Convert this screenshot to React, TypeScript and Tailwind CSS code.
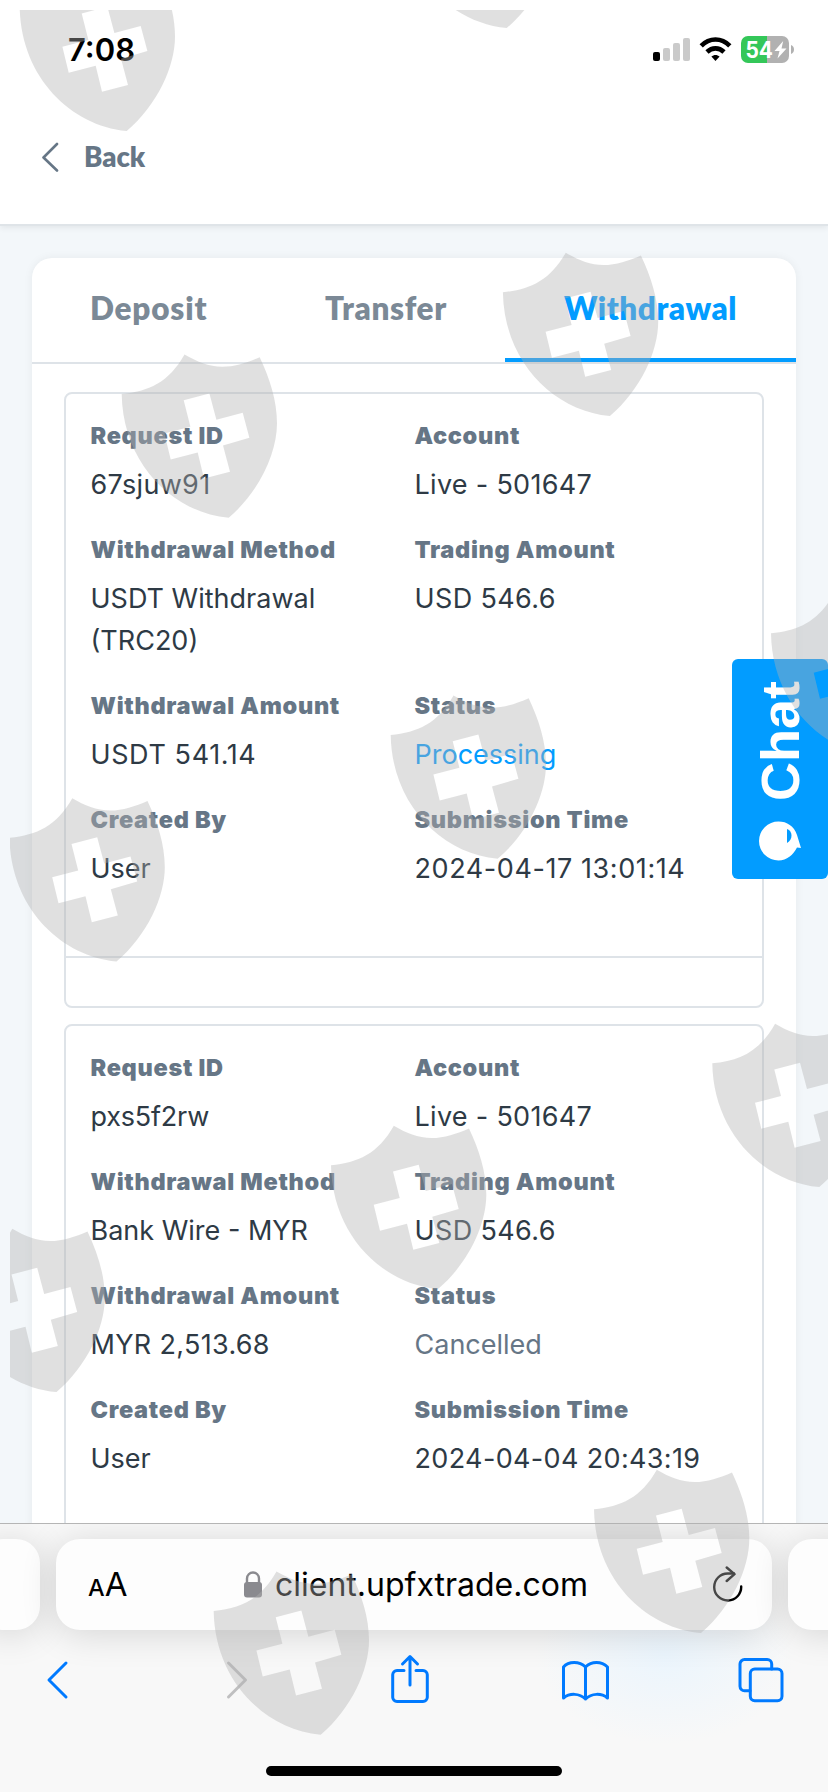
import { ReactNode } from "react";

type Field = {
  label: string;
  value: string;
  style?: string;
  tall?: boolean;
};

const shields = [
  [19.7, -32.3],
  [399.7, -135.3],
  [121.7, 354.5],
  [502.9, 252.7],
  [771, 593.8],
  [390.7, 695.5],
  [9.5, 798.3],
  [712.3, 1023.8],
  [331, 1125.8],
  [-50.5, 1228.8],
  [594, 1469.8],
  [213.7, 1571.5],
];

const tabs = [
  { title: "Deposit", active: false, style: "w-[234px] pl-[58px] tracking-[0.8px]" },
  { title: "Transfer", active: false, style: "w-[239px] pl-[59px] tracking-[0.65px]" },
  { title: "Withdrawal", active: true, style: "w-[291px] pl-[59px] tracking-[0.5px]" },
];

const requests: Field[][] = [
  [
    { label: "Request ID", value: "67sjuw91", style: "text-[#2e3a45] tracking-[0.3px]" },
    { label: "Account", value: "Live - 501647", style: "text-[#2e3a45] tracking-[0.3px]" },
    { label: "Withdrawal Method", value: "USDT Withdrawal (TRC20)", tall: true },
    { label: "Trading Amount", value: "USD 546.6", style: "text-[#2e3a45] tracking-[0.37px]", tall: true },
    { label: "Withdrawal Amount", value: "USDT 541.14", style: "text-[#2e3a45] tracking-[0.6px]" },
    { label: "Status", value: "Processing", style: "text-[#029cff]" },
    { label: "Created By", value: "User" },
    { label: "Submission Time", value: "2024-04-17 13:01:14", style: "text-[#2e3a45] tracking-[0.58px] whitespace-nowrap" },
  ],
  [
    { label: "Request ID", value: "pxs5f2rw", style: "text-[#2e3a45] tracking-[-0.2px]" },
    { label: "Account", value: "Live - 501647", style: "text-[#2e3a45] tracking-[0.3px]" },
    { label: "Withdrawal Method", value: "Bank Wire - MYR" },
    { label: "Trading Amount", value: "USD 546.6", style: "text-[#2e3a45] tracking-[0.37px]" },
    { label: "Withdrawal Amount", value: "MYR 2,513.68", style: "text-[#2e3a45] tracking-[0.32px]" },
    { label: "Status", value: "Cancelled", style: "text-[#667686]" },
    { label: "Created By", value: "User" },
    { label: "Submission Time", value: "2024-04-04 20:43:19", style: "text-[#2e3a45] tracking-[0.35px] whitespace-nowrap" },
  ],
];

function StatusBar() {
  return (
    <div className="flex h-[100px] items-center pl-[68px] pr-[33px]">
      <span className="pb-[2px] font-['Inter',sans-serif] text-[31px] leading-none font-semibold">7:08</span>
      <svg className="ml-auto" width="142" height="28" viewBox="0 0 142 28">
        <rect x="0" y="16" width="7" height="9" rx="2" fill="#000" />
        <rect x="10" y="12" width="7" height="13" rx="2" fill="#cacaca" />
        <rect x="20" y="7" width="7" height="18" rx="2" fill="#cacaca" />
        <rect x="30" y="2" width="7" height="23" rx="2" fill="#cacaca" />
        <g fill="none" stroke="#000" strokeWidth="4.6">
          <path d="M48.200 9.800C56.400 1.400 68.600 1.400 76.800 9.800" />
          <path d="M54 16C59 11.200 66 11.200 71 16" />
        </g>
        <path d="M58.400 20.600C60.800 18.400 64.200 18.400 66.600 20.600L62.500 25Z" fill="#000" />
        <path d="M95 0H114V27H95A7 7 0 0 1 88 20V7A7 7 0 0 1 95 0Z" fill="#34c759" />
        <path d="M114 0H129A7 7 0 0 1 136 7V20A7 7 0 0 1 129 27H114Z" fill="#b1b1b1" />
        <path d="M138 9C142 10.500 142 16.500 138 18Z" fill="#b1b1b1" />
        <text x="92.500" y="21.500" fontSize="22.500" fontWeight="700" fill="#fff" fontFamily="Inter, sans-serif" textLength="27.500" lengthAdjust="spacingAndGlyphs">54</text>
        <path d="M130.200 5L121.500 15H126.500L124.500 22.500L133.500 12.500H128.500Z" fill="#fff" />
      </svg>
    </div>
  );
}

function RequestField({ label, value, style, tall }: Field) {
  return (
    <div className={tall ? "h-[156px]" : "h-[114px]"}>
      <div className="text-[23.5px] leading-[36px] font-black tracking-[0.7px] whitespace-nowrap text-[#667686]">{label}</div>
      <div className={"mt-[10px] w-[250px] text-[27px] leading-[42px] " + (style || "text-[#2e3a45]")}>{value}</div>
    </div>
  );
}

function RequestCard({ fields }: { fields: Field[] }) {
  return (
    <div className="flex h-[616px] shrink-0 flex-col rounded-lg border-2 border-[#dee3e8]">
      <div className="grid h-[564px] grid-cols-[324px_1fr] content-start border-b-2 border-[#dee3e8] pt-[24px] pl-[24.5px]">
        {fields.map((field) => (
          <RequestField key={field.label} {...field} />
        ))}
      </div>
    </div>
  );
}

function ToolButton({ children }: { children: ReactNode }) {
  return (
    <button className="shrink-0">
      <svg width="54" height="54" viewBox="0 0 54 54" fill="none" stroke="#007aff" strokeWidth="3" strokeLinecap="round" strokeLinejoin="round">
        {children}
      </svg>
    </button>
  );
}

function BrowserBar() {
  return (
    <div className="relative h-[269px] shrink-0 overflow-hidden border-t border-[#b5b5b5] bg-[#f8f8f8] bg-[radial-gradient(ellipse_130px_90px_at_665px_130px,#ebf5fd,transparent)]">
      <div className="-mx-[20px] flex h-[107px] gap-4 pt-[15px]">
        <div className="h-[91px] w-[60px] shrink-0 rounded-[24px] bg-[#fdfdfd] shadow-[0_4px_36px_rgba(0,0,0,0.14)]" />
        <div className="flex h-[91px] w-[716px] shrink-0 items-center rounded-[24px] bg-[#fdfdfd] pr-[27px] pl-[32px] text-black shadow-[0_4px_36px_rgba(0,0,0,0.14)]">
          <span className="flex w-[40px] items-baseline">
            <span className="text-[23.5px] leading-none font-medium">A</span>
            <span className="text-[33px] leading-none">A</span>
          </span>
          <svg className="ml-[115px]" width="20" height="28" viewBox="0 0 20 28">
            <path d="M4 13V7.500a6 6 0 0 1 12 0V13" fill="none" stroke="#8a8a8f" strokeWidth="2.400" />
            <rect x="1" y="11" width="18" height="15.500" rx="3" fill="#8a8a8f" />
          </svg>
          <span className="ml-[12px] text-[32px] leading-none">client.upfxtrade.com</span>
          <svg className="ml-auto" width="32" height="38" viewBox="0 0 32 38" fill="none" stroke="#000" strokeWidth="2.400" strokeLinecap="round" strokeLinejoin="round">
            <path d="M28.200 20.500A13.500 13.500 0 1 1 14.700 7.500H21" />
            <path d="M13.700 1.500L21.500 8.200L13.700 15" />
          </svg>
        </div>
        <div className="h-[91px] w-[80px] shrink-0 rounded-[24px] bg-[#fdfdfd] shadow-[0_4px_36px_rgba(0,0,0,0.14)]" />
      </div>
      <div className="relative flex h-[100px] items-center justify-between pr-[40px] pl-[30px]">
        <ToolButton>
          <path d="M36 9L19 26L36 43" />
        </ToolButton>
        <ToolButton>
          <path stroke="#bfbfc0" d="M22.500 9L39.500 26L22.500 43" />
        </ToolButton>
        <ToolButton>
          <path d="M22 16.500H15A4.300 4.300 0 0 0 10.700 20.800V43.200A4.300 4.300 0 0 0 15 47.500H41A4.300 4.300 0 0 0 45.300 43.200V20.800A4.300 4.300 0 0 0 41 16.500H34M28 31V3M20.500 10L28 2.500L35.500 10" />
        </ToolButton>
        <ToolButton>
          <path d="M27.500 13V45M27.500 13C21.500 7 10.500 7 5.500 13V44C11.500 39 21.500 39 27.500 45C33.500 39 43.500 39 49.500 44V13C43.500 7 33.500 7 27.500 13" />
        </ToolButton>
        <ToolButton>
          <rect x="16.300" y="15" width="31.700" height="31.700" rx="4.500" />
          <path d="M16 36.800H10.500A4.500 4.500 0 0 1 6 32.300V10A4.500 4.500 0 0 1 10.500 5.500H33.200A4.500 4.500 0 0 1 37.700 10V15" />
        </ToolButton>
      </div>
      <div className="mx-auto mt-[35px] h-[10px] w-[296px] rounded-full bg-black" />
    </div>
  );
}

function ChatButton() {
  return (
    <button className="absolute top-[659px] right-0 flex h-[220px] w-[96px] flex-col items-center justify-end rounded-md bg-[#029cff] pb-[18px]">
      <span className="mb-[20px] rotate-180 font-['Liberation_Sans',sans-serif] text-[54px] leading-[62px] font-bold text-white [writing-mode:vertical-rl]">
        Chat
      </span>
      <svg width="42" height="40" viewBox="0 0 42 40">
        <path d="M19.500 0.500A19 19 0 0 0 19.500 39.500C28 39.500 34 34 38 26.500L42 27L38 14C35 5 28 0.500 19.500 0.500Z" fill="#fff" />
        <path d="M28 8C34 10 34 19 28 22Z" fill="#029cff" />
      </svg>
    </button>
  );
}

// Decorative shields scattered over the whole page
function ShieldOverlay() {
  return (
    <svg className="pointer-events-none absolute top-[10px] left-[10px] z-20" width="818" height="1782" viewBox="10 10 818 1782">
      {shields.map(([x, y]) => (
        <path
          key={`${x}-${y}`}
          transform={`translate(${x} ${y})`}
          fill="#b2b2b2"
          fillOpacity="0.4"
          fillRule="evenodd"
          d="M62.800 0C75 7 87 12.300 100.700 12.300C113 12.300 126 8 138 2.700C148 24 155.300 46 155.300 69C155.300 98 138 137 107 163.300C50 158 1 108 0 39.500C27 37 47 28 62.800 0ZM62 45.700L87.700 39L94.700 65.300L121 58.300L127.700 83.300L101.300 91L108.300 117.300L82.300 124L76 98L49 105L42.700 79L68.700 72.300Z"
        />
      ))}
    </svg>
  );
}

export default function App() {
  return (
    <div className="relative flex h-[1792px] w-[828px] flex-col overflow-hidden bg-[#f3f7fa] font-['Inter',sans-serif]">
      <header className="z-10 h-[226px] shrink-0 border-b-2 border-[#dfe4e8] bg-white shadow-[0_2px_6px_rgba(0,0,0,0.07)]">
        <StatusBar />
        <button className="mt-[39px] flex items-center pl-[41px] text-[#667686]">
          <svg width="18" height="30" viewBox="0 0 18 30" fill="none" stroke="currentColor" strokeWidth="2.600" strokeLinecap="round" strokeLinejoin="round">
            <path d="M16 2L2.500 15.500L16 28.500" />
          </svg>
          <span className="ml-[25px] font-['Lato',sans-serif] text-[27.5px] leading-[36px] font-extrabold">Back</span>
        </button>
      </header>
      <main className="h-[1297px] shrink-0 overflow-hidden px-8 pt-8">
        <div className="h-[1400px] rounded-t-[20px] bg-white shadow-[0_0_10px_rgba(0,0,0,0.06)]">
          <nav className="flex h-[106px] border-b-2 border-[#dee3e8]">
            {tabs.map((tab) => (
              <button
                key={tab.title}
                className={
                  "shrink-0 border-b-4 pt-[1px] text-left font-['Lato',sans-serif] text-[31.5px] font-extrabold " +
                  tab.style +
                  (tab.active ? " border-[#029cff] text-[#029cff]" : " border-transparent text-[#7b8996]")
                }
              >
                {tab.title}
              </button>
            ))}
          </nav>
          <div className="flex flex-col gap-4 px-8 pt-7">
            {requests.map((fields) => (
              <RequestCard key={fields[0].value} fields={fields} />
            ))}
          </div>
        </div>
      </main>
      <BrowserBar />
      <ChatButton />
      <ShieldOverlay />
    </div>
  );
}
